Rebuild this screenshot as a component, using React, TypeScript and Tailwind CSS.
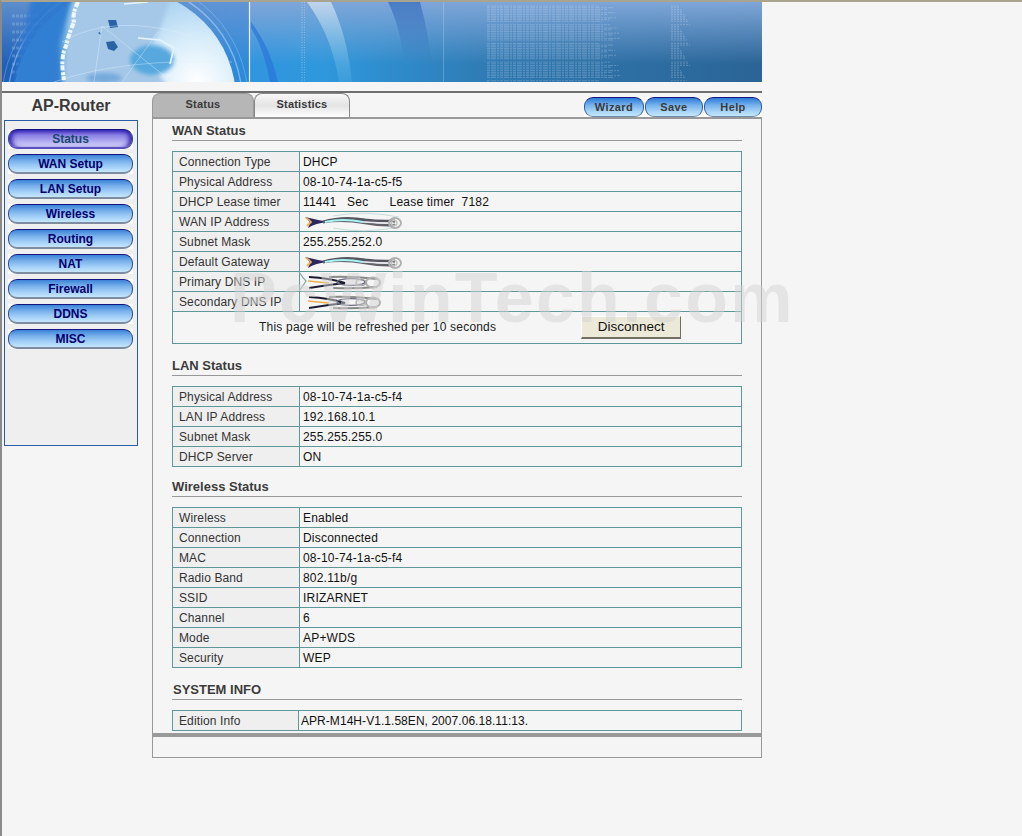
import React from "react";

const FONT = "font-['Liberation_Sans',Arial,sans-serif]";

const NAV = ["Status", "WAN Setup", "LAN Setup", "Wireless", "Routing", "NAT", "Firewall", "DDNS", "MISC"];

type Row = { label: string; value: React.ReactNode };

const WAN_ROWS: Row[] = [
  { label: "Connection Type", value: "DHCP" },
  { label: "Physical Address", value: "08-10-74-1a-c5-f5" },
  { label: "DHCP Lease timer", value: <span className="whitespace-pre">{"11441   Sec      Lease timer  7182"}</span> },
  { label: "WAN IP Address", value: <Smudge variant={0} /> },
  { label: "Subnet Mask", value: "255.255.252.0" },
  { label: "Default Gateway", value: <Smudge variant={1} /> },
  { label: "Primary DNS IP", value: <Smudge variant={2} /> },
  { label: "Secondary DNS IP", value: <Smudge variant={3} /> },
];

const LAN_ROWS: Row[] = [
  { label: "Physical Address", value: "08-10-74-1a-c5-f4" },
  { label: "LAN IP Address", value: "192.168.10.1" },
  { label: "Subnet Mask", value: "255.255.255.0" },
  { label: "DHCP Server", value: "ON" },
];

const WIRELESS_ROWS: Row[] = [
  { label: "Wireless", value: "Enabled" },
  { label: "Connection", value: "Disconnected" },
  { label: "MAC", value: "08-10-74-1a-c5-f4" },
  { label: "Radio Band", value: "802.11b/g" },
  { label: "SSID", value: "IRIZARNET" },
  { label: "Channel", value: "6" },
  { label: "Mode", value: "AP+WDS" },
  { label: "Security", value: "WEP" },
];

// the blurred-out addresses in the picture
function Smudge({ variant }: { variant: number }) {
  if (variant < 2) {
    return (
      <svg width="100" height="18" viewBox="0 0 100 18" className="block overflow-visible">
        {variant === 0 && <path d="M30 3 Q60 -3 96 4 M30 15 Q60 21 96 14" stroke="#c8dede" strokeWidth="1" fill="none" />}
        <g className="blur-[0.5px]">
          <path d="M2 4 Q14 7 26 9 Q12 10 5 15 Q9 8 2 4Z" fill="#2b2560" />
          <path d="M3 5 Q7 7 8 9 Q6 11 4 13" stroke="#e8b050" strokeWidth="1.8" fill="none" />
          <path d="M20 9 Q40 3 62 7 Q78 9 92 8" stroke="#55555f" strokeWidth="3" fill="none" />
          <path d="M20 9 Q40 6 62 10 Q78 13 92 12" stroke="#62626a" strokeWidth="2.4" fill="none" />
          <path d="M22 9 Q40 5 60 9" stroke="#a8f4f8" strokeWidth="2.2" fill="none" />
          <path d="M60 9 Q76 10 90 10" stroke="#e8e8ee" strokeWidth="1.4" fill="none" />
          <ellipse cx="92" cy="10" rx="6" ry="5" fill="none" stroke="#b0b0b0" strokeWidth="2" />
          <ellipse cx="91" cy="10" rx="3" ry="2.5" fill="none" stroke="#c0c0c0" strokeWidth="1.4" />
        </g>
      </svg>
    );
  }
  return (
    <svg width="84" height="18" viewBox="0 0 84 18" className="block overflow-visible">
      {variant === 2 && <path d="M-4 -1 Q0 5 3 8 Q0 13 -4 18" stroke="#7aa8a8" strokeWidth="1.2" fill="none" />}
      <g className="blur-[0.5px]">
        <path d="M6 4 Q26 5 42 10 Q24 12 6 15" stroke="#1c1c30" strokeWidth="2" fill="none" />
        <path d="M5 8 Q14 9 26 10" stroke="#e8b050" strokeWidth="1.5" fill="none" />
        <path d="M26 4 Q48 3 74 6 M30 15 Q50 16 74 14" stroke="#888" strokeWidth="2" fill="none" />
        <ellipse cx="48" cy="9" rx="14" ry="3.4" fill="none" stroke="#6c6c84" strokeWidth="1.4" />
        <ellipse cx="70" cy="9.5" rx="7" ry="5" fill="none" stroke="#b0b0b0" strokeWidth="2" />
        <ellipse cx="58" cy="9.5" rx="5" ry="3" fill="none" stroke="#a0a0a0" strokeWidth="1.2" />
      </g>
    </svg>
  );
}

function Banner() {
  const lines = [];
  for (let i = 0; i < 46; i++) {
    const y = 4 + i * 1.7;
    if (i % 11 === 10) continue;
    const w = 112 + ((i * 37) % 22);
    lines.push(
      <g key={i}>
        <line x1="485" y1={y} x2={485 + w} y2={y} stroke="#e4eefa" strokeOpacity="0.4" strokeWidth="0.6" strokeDasharray="3 1 5 1 2 1" />
        <line x1="669" y1={y} x2={669 + 8 + (i * 13) % 12} y2={y} stroke="#e4eefa" strokeOpacity="0.4" strokeWidth="0.6" strokeDasharray="2 1" />
      </g>
    );
  }
  return (
    <svg width="760" height="80" viewBox="0 0 760 80" className="block">
      <defs>
        <linearGradient id="skyTop" x1="0" y1="0" x2="0" y2="1">
          <stop offset="0" stopColor="#7fa6d8" />
          <stop offset="1" stopColor="#7fa6d8" stopOpacity="0" />
        </linearGradient>
        <linearGradient id="deep" x1="0" y1="0" x2="1" y2="0">
          <stop offset="0" stopColor="#1f60b8" />
          <stop offset="0.24" stopColor="#3392e0" />
          <stop offset="0.42" stopColor="#2f98dc" />
          <stop offset="0.66" stopColor="#2f78b0" />
          <stop offset="1" stopColor="#2b6496" />
        </linearGradient>
        <linearGradient id="leftSky" x1="0" y1="0" x2="1" y2="0">
          <stop offset="0" stopColor="#1f5fb4" />
          <stop offset="1" stopColor="#2a76d0" />
        </linearGradient>
        <radialGradient id="globe" gradientUnits="userSpaceOnUse" cx="195" cy="80" r="150">
          <stop offset="0" stopColor="#ffffff" />
          <stop offset="0.3" stopColor="#d6ecfa" />
          <stop offset="0.65" stopColor="#9ccbee" />
          <stop offset="1" stopColor="#5aa2de" />
        </radialGradient>
        <linearGradient id="bandLight" x1="0" y1="0" x2="0" y2="1">
          <stop offset="0" stopColor="#dce8f2" stopOpacity="0.7" />
          <stop offset="1" stopColor="#6cc0ec" stopOpacity="0.2" />
        </linearGradient>
        <linearGradient id="bandDark" x1="0" y1="0" x2="0" y2="1">
          <stop offset="0" stopColor="#2e66b8" stopOpacity="0.65" />
          <stop offset="0.85" stopColor="#2e66b8" stopOpacity="0" />
        </linearGradient>
        <filter id="soft" x="-20%" y="-20%" width="140%" height="140%"><feGaussianBlur stdDeviation="2" /></filter>
        <filter id="softer" x="-20%" y="-20%" width="140%" height="140%"><feGaussianBlur stdDeviation="0.7" /></filter>
      </defs>
      <rect width="760" height="80" fill="url(#deep)" />
      <rect width="760" height="62" fill="url(#skyTop)" />
      <rect width="247" height="80" fill="url(#leftSky)" opacity="0.35" />
      <path d="M305 0 L329 0 Q346 36 350 80 L337 80 Q330 34 305 0Z" fill="url(#bandLight)" />
      <path d="M386 0 L418 0 Q428 36 430 70 L402 60 Q398 24 386 0Z" fill="url(#bandDark)" />
      <path d="M249 20 Q268 44 276 80 L268 80 Q262 46 249 26Z" fill="#2a72d8" fillOpacity="0.65" />
      <line x1="300" y1="0" x2="300" y2="80" stroke="#e4f2fc" strokeOpacity="0.45" strokeDasharray="1 1.5" />
      <line x1="302.5" y1="0" x2="302.5" y2="80" stroke="#e4f2fc" strokeOpacity="0.35" strokeDasharray="1 1.5" />
      <line x1="441.5" y1="0" x2="441.5" y2="80" stroke="#d8eaf8" strokeOpacity="0.25" />

      <path d="M10 14 H36 M10 22 H42 M10 30 H40 M10 38 H38 M10 46 H40 M10 54 H34 M10 62 H30 M10 70 H32" stroke="#a8ccf4" strokeOpacity="0.3" strokeWidth="3" strokeDasharray="3 1" />
      <circle cx="123" cy="98" r="111" fill="url(#globe)" />
      <circle cx="123" cy="98" r="117" fill="none" stroke="#bfe2f8" strokeOpacity="0.5" strokeWidth="1.5" />
      <circle cx="123" cy="98" r="123" fill="none" stroke="#bfe2f8" strokeOpacity="0.3" strokeWidth="1" />
      <path d="M70 -6 L58 40 L60 84 L10 84 L30 -6Z" fill="#2c78d0" fillOpacity="0.85" filter="url(#soft)" />
      <path d="M72 -4 Q64 24 66 30 Q62 50 62 84 L166 84 Q148 64 146 50 Q160 28 168 -4Z" fill="#a6c8e8" filter="url(#soft)" />
      <ellipse cx="150" cy="58" rx="22" ry="15" fill="#56a8de" filter="url(#soft)" />
      <ellipse cx="102" cy="76" rx="18" ry="5" fill="#74aadc" filter="url(#soft)" />
      <path d="M76 0 Q70 12 72 20 Q66 34 64 44 Q58 56 62 78" stroke="#f0f8fe" strokeWidth="4" strokeDasharray="5 2 3 1" fill="none" filter="url(#softer)" />
      <path d="M122 2 L146 0 M136 36 L158 38 L172 46 L168 62" stroke="#e8f4fc" strokeWidth="1.6" fill="none" filter="url(#softer)" />
      <path d="M106 18 L114 18 L116 25 L108 26Z M104 40 L112 39 L116 45 L112 49 L106 47Z M96 31 L98 30 L99 33Z" fill="#2a62a8" filter="url(#softer)" />
      <path d="M60 40 Q110 10 190 34 M52 80 Q120 56 230 60 M100 24 L170 80 M156 30 L120 80 M100 24 L92 80" stroke="#e0f0fc" strokeOpacity="0.4" fill="none" />
      <line x1="247.5" y1="0" x2="247.5" y2="80" stroke="#eef7fe" strokeWidth="1.2" />
      {lines}
    </svg>
  );
}

function Pill({ label, active }: { label: string; active?: boolean }) {
  return (
    <div className="w-[125px] bg-white">
      <a
        className={`flex h-[20px] items-center justify-center rounded-[9px] border border-b-2 border-t-[#15157f] border-l-[#2a4f9c] border-r-[#2a4f9c] text-[12px] font-bold ${
          active
            ? "border-b-[#5a50c0] bg-[linear-gradient(#3a28b8_0%,#8a80e4_30%,#b0aaf0_65%,#d8d4fa_100%)] text-[#17486e] shadow-[inset_6px_0_5px_-3px_#3020b0,inset_-6px_0_5px_-3px_#3020b0]"
            : "border-b-[#7d8ca0] bg-[linear-gradient(#3a82d8_0%,#78b0ea_35%,#a4d0f8_70%,#c6e6fc_100%)] text-[#00006e]"
        }`}
      >
        {label}
      </a>
    </div>
  );
}

function TopButton({ label, width }: { label: string; width: string }) {
  return (
    <div className={`${width} bg-white`}>
      <a className="flex h-[20px] items-center justify-center rounded-[9px] border border-t-[#15157f] border-l-[#2a5fa8] border-r-[#2a5fa8] border-b-[#6f8ca8] bg-[linear-gradient(#2c7ad8_0%,#76b2ec_40%,#a8d4f8_75%,#c4e6fc_100%)] text-[11px] font-bold tracking-[0.4px] text-[#3a3a3a]">
        {label}
      </a>
    </div>
  );
}

function Heading({ children, className }: { children: React.ReactNode; className: string }) {
  return (
    <h2 className={`w-[570px] border-b border-[#999] text-[13px] leading-[16px] font-bold text-[#3c3c3c] ${className}`}>
      {children}
    </h2>
  );
}

function StatusTable({ rows, narrow, children }: { rows: Row[]; narrow?: boolean; children?: React.ReactNode }) {
  return (
    <table className="w-[570px] table-fixed border-collapse border border-[#5f9898] text-[12px]">
      <colgroup>
        <col className={narrow ? "w-[126px]" : "w-[127px]"} />
        <col />
      </colgroup>
      <tbody>
        {rows.map((r) => (
          <tr key={r.label} className="h-[20px]">
            <td className="border border-[#5f9898] bg-[#efefef] pl-[6px] tracking-[0.12px] whitespace-nowrap text-[#333]">{r.label}</td>
            <td className={`border border-[#5f9898] text-[#111] ${narrow ? "pl-[2px] tracking-[0.05px]" : "pl-[3px] tracking-[0.2px]"}`}>{r.value}</td>
          </tr>
        ))}
        {children}
      </tbody>
    </table>
  );
}

export default function App() {
  return (
    <div className={`${FONT} relative min-h-[836px] overflow-hidden border-t-2 border-l-2 border-t-[#a8a490] border-l-[#8a8a8a] bg-[#f5f5f5]`}>
      <Banner />
      <div className="mt-[9px] w-[760px] border-t-2 border-[#6e6e6e]" />
      <div className="flex w-[760px] items-start">
        <aside className="ml-[2px] w-[134px]">
          <div className="pt-[3px] text-center text-[16px] leading-[19px] font-bold text-[#3a3a3a]">AP-Router</div>
          <nav className="mt-[5px] flex h-[326px] flex-col gap-[5px] border border-[#2a5ca8] bg-[#efefef] pt-[8px] pl-[3px]">
            {NAV.map((n, i) => (
              <Pill key={n} label={n} active={i === 0} />
            ))}
          </nav>
        </aside>
        <main className="ml-[14px] w-[610px]">
          <div className="flex h-[24px] items-end">
            <div className="flex h-[24px] w-[102px] items-center justify-center rounded-t-[8px] border border-b-0 border-[#999] bg-[#b6b6b6] pb-[2px] text-[11px] font-bold tracking-[0.2px] text-[#3a3a3a]">
              Status
            </div>
            <div className="flex h-[24px] w-[96px] items-center justify-center rounded-t-[8px] border border-b-0 border-[#888] bg-[linear-gradient(#f8f8f8_0%,#e4e4e4_50%,#ffffff_100%)] pb-[2px] text-[11px] font-bold tracking-[0.2px] text-[#3a3a3a]">
              Statistics
            </div>
            <div className="ml-auto flex gap-px">
              <TopButton label="Wizard" width="w-[60px]" />
              <TopButton label="Save" width="w-[58px]" />
              <TopButton label="Help" width="w-[58px]" />
            </div>
          </div>
          <div className="border border-t-2 border-[#999] pl-[19px]">
            <Heading className="h-[22px] pt-[4px]">WAN Status</Heading>
            <div className="mt-[10px]">
              <StatusTable rows={WAN_ROWS}>
                <tr className="h-[32px]">
                  <td colSpan={2} className="border border-[#5f9898] p-0">
                    <div className="flex items-center">
                      <span className="ml-[86px] pb-[2px] tracking-[0.2px] text-[#222]">This page will be refreshed per 10 seconds</span>
                      <button className="ml-[85px] h-[23px] w-[100px] border border-t-white border-l-white border-r-[#716f64] border-b-2 border-b-[#716f64] bg-[#ece9d8] text-[13.5px] text-[#111]">
                        Disconnect
                      </button>
                    </div>
                  </td>
                </tr>
              </StatusTable>
            </div>
            <Heading className="mt-[13px] h-[19px] pt-px">LAN Status</Heading>
            <div className="mt-[10px]">
              <StatusTable rows={LAN_ROWS} />
            </div>
            <Heading className="mt-[12px] h-[18px]">Wireless Status</Heading>
            <div className="mt-[10px]">
              <StatusTable rows={WIRELESS_ROWS} />
            </div>
            <Heading className="mt-[14px] h-[18px] pl-px">SYSTEM INFO</Heading>
            <div className="mt-[10px]">
              <StatusTable narrow rows={[{ label: "Edition Info", value: "APR-M14H-V1.1.58EN, 2007.06.18.11:13." }]} />
            </div>
            <div className="h-[2px]" />
          </div>
          <div className="h-[24px] border border-t-[3px] border-[#999]" />
        </main>
      </div>
      <div className="pointer-events-none absolute top-[261px] left-[228px] text-[70px] leading-[70px] font-bold tracking-[2.3px] whitespace-nowrap text-[#d4d4d4] opacity-50">
        PcWinTech.com
      </div>
    </div>
  );
}
